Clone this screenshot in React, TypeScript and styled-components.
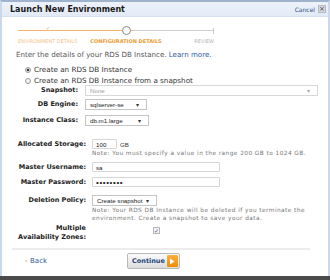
import styled, { createGlobalStyle } from 'styled-components'

const GlobalStyle = createGlobalStyle`
  html, body {
    margin: 0;
    padding: 0;
    width: 330px;
    height: 280px;
    overflow: hidden;
    background: #ffffff;
  }
  * {
    box-sizing: border-box;
  }
`

function App() {
  return (
    <>
      <GlobalStyle />
      <Window>
        <Header>
          <Title>Launch New Environment</Title>
          <CancelGroup>
            <CancelLink>Cancel</CancelLink>
            <CloseBox>×</CloseBox>
          </CancelGroup>
        </Header>

        <Body>
          <Stepper>
            <MarkerRow>
              <Marker $align="center">
                <Check>✓</Check>
              </Marker>
              <Marker $align="center">
                <Circle />
              </Marker>
              <Marker $align="end">
                <EndTick />
              </Marker>
            </MarkerRow>
            <StepLabel $state="done" $align="start">Environment Details</StepLabel>
            <StepLabel $state="current" $align="center">Configuration Details</StepLabel>
            <StepLabel $state="todo" $align="end">Review</StepLabel>
          </Stepper>

          <Intro>
            Enter the details of your RDS DB Instance. <Link>Learn more.</Link>
          </Intro>

          <Options>
            <Option>
              <Radio $checked />
              Create an RDS DB Instance
            </Option>
            <Option>
              <Radio />
              Create an RDS DB Instance from a snapshot
            </Option>
          </Options>

          {/* snapshot / engine / class */}
          <Form $labelWidth={62} $gap={7}>
            <Label>Snapshot:</Label>
            <Cell>
              <Select $width={233} $disabled>
                <span>None</span>
                <Caret $muted>▾</Caret>
              </Select>
            </Cell>

            <Label $top={3}>DB Engine:</Label>
            <Cell $top={3}>
              <Select $width={62}>
                <span>sqlserver-se</span>
                <Caret>▾</Caret>
              </Select>
            </Cell>

            <Label $top={5}>Instance Class:</Label>
            <Cell $top={5}>
              <Select $width={64}>
                <span>db.m1.large</span>
                <Caret>▾</Caret>
              </Select>
            </Cell>
          </Form>

          {/* storage / credentials / policy */}
          <Form $labelWidth={70} $gap={6}>
            <Label $top={13}>Allocated Storage:</Label>
            <Cell $top={13}>
              <InlineRow>
                <TextInput $width={25} value="100" readOnly />
                <Unit>GB</Unit>
              </InlineRow>
              <Note>Note: You must specify a value in the range 200 GB to 1024 GB.</Note>
            </Cell>

            <Label $top={5}>Master Username:</Label>
            <Cell $top={5}>
              <TextInput $width={128} value="sa" readOnly />
            </Cell>

            <Label $top={4}>Master Password:</Label>
            <Cell $top={4}>
              <TextInput $width={128} $dots type="password" value="password" readOnly />
            </Cell>

            <Label $top={7}>Deletion Policy:</Label>
            <Cell $top={7}>
              <Select $width={65}>
                <span>Create snapshot</span>
                <Caret>▾</Caret>
              </Select>
              <Note>
                Note: Your RDS DB Instance will be deleted if you terminate the
                <br />
                environment. Create a snapshot to save your data.
              </Note>
            </Cell>

            <Label $top={2} $lineHeight={9}>
              Multiple
              <br />
              Availability Zones:
            </Label>
            <Cell $top={2}>
              <CheckBox>✓</CheckBox>
            </Cell>
          </Form>
        </Body>

        <Footer>
          <BackLink>
            <BackArrow>‹</BackArrow> Back
          </BackLink>
          <ContinueButton>
            Continue
            <PlayIcon>
              <svg width="6" height="7" viewBox="0 0 6 7">
                <path d="M1 0.5 L5.5 3.5 L1 6.5 Z" fill="#ffffff" />
              </svg>
            </PlayIcon>
          </ContinueButton>
        </Footer>
        <BottomBand />
      </Window>
    </>
  )
}

const Window = styled.div`
  width: 330px;
  height: 280px;
  display: flex;
  flex-direction: column;
  border-top: 2px solid #9fb3cc;
  border-left: 2px solid #c9d8ec;
  border-right: 2px solid #c9d8ec;
  background: #ffffff;
  font-family: 'DejaVu Sans', Verdana, sans-serif;
  font-size: 7px;
  color: #555555;
`

const Header = styled.div`
  height: 15px;
  flex: none;
  display: flex;
  align-items: center;
  justify-content: space-between;
  padding: 0 2px 0 8px;
  background: linear-gradient(#edf2fa, #e2eaf6);
  border-bottom: 1px solid #d5e0ee;
`

const Title = styled.div`
  font-weight: bold;
  font-size: 8px;
  color: #1a1a1a;
`

const CancelGroup = styled.div`
  display: flex;
  align-items: center;
  gap: 3px;
`

const CancelLink = styled.span`
  font-size: 6px;
  color: #2d4f86;
`

const CloseBox = styled.span`
  width: 8px;
  height: 8px;
  display: flex;
  align-items: center;
  justify-content: center;
  background: #d6d9de;
  border: 1px solid #b5bac2;
  font-size: 7px;
  line-height: 1;
  color: #444444;
`

const Body = styled.div`
  flex: 1;
  min-height: 0;
  overflow: hidden;
  padding: 9px 8px 0 14px;
`

const Stepper = styled.div`
  width: 196px;
  margin-left: 2px;
  display: grid;
  grid-template-columns: 60px 1fr 40px;
  column-gap: 6px;
`

const MarkerRow = styled.div`
  grid-column: 1 / -1;
  display: grid;
  grid-template-columns: 60px 1fr 40px;
  column-gap: 6px;
  height: 9px;
  background: linear-gradient(to right, #f2b46d 0, #f2b46d 115px, #cfcfcf 115px, #cfcfcf 100%) no-repeat;
  background-size: 100% 1px;
  background-position: 0 4px;
`

const Marker = styled.div<{ $align: 'center' | 'end' }>`
  display: flex;
  align-items: center;
  justify-content: ${(p) => (p.$align === 'end' ? 'flex-end' : 'center')};
`

const Check = styled.span`
  font-size: 5px;
  line-height: 1;
  color: #f0a050;
  margin-top: -4px;
`

const Circle = styled.span`
  width: 9px;
  height: 9px;
  border-radius: 50%;
  border: 1px solid #8a8a8a;
  background: #ffffff;
`

const EndTick = styled.span`
  width: 1px;
  height: 6px;
  background: #c8c8c8;
`

const StepLabel = styled.div<{ $state: 'done' | 'current' | 'todo'; $align: string }>`
  margin-top: 3px;
  font-size: 5px;
  line-height: 6px;
  text-transform: uppercase;
  white-space: nowrap;
  text-align: ${(p) => p.$align};
  font-weight: ${(p) => (p.$state === 'current' ? 'bold' : 'normal')};
  color: ${(p) => (p.$state === 'current' ? '#ec9a34' : p.$state === 'done' ? '#f3bf88' : '#b3b3b3')};
`

const Intro = styled.div`
  margin-top: 6px;
  font-size: 7.1px;
  line-height: 9px;
  color: #555555;
  white-space: nowrap;
`

const Link = styled.span`
  color: #2a5a9e;
`

const Options = styled.div`
  margin-top: 6px;
  padding-left: 9px;
  display: flex;
  flex-direction: column;
  gap: 2px;
`

const Option = styled.div`
  display: flex;
  align-items: center;
  gap: 3px;
  font-size: 7.2px;
  line-height: 9px;
  color: #333333;
  white-space: nowrap;
`

const Radio = styled.span<{ $checked?: boolean }>`
  width: 6px;
  height: 6px;
  border-radius: 50%;
  border: 1px solid #9a9a9a;
  background: ${(p) => (p.$checked ? 'radial-gradient(circle, #333 0 1.2px, #e8e8e8 1.6px)' : '#f1f1f1')};
`

const Form = styled.div<{ $labelWidth: number; $gap: number }>`
  display: grid;
  grid-template-columns: ${(p) => p.$labelWidth}px 1fr;
  column-gap: ${(p) => p.$gap}px;
  &:first-of-type {
    margin-top: 1px;
  }
`

const Label = styled.div<{ $top?: number; $lineHeight?: number }>`
  margin-top: ${(p) => p.$top ?? 0}px;
  text-align: right;
  font-size: 6.5px;
  font-weight: bold;
  color: #222222;
  line-height: ${(p) => p.$lineHeight ?? 11}px;
  white-space: nowrap;
`

const Cell = styled.div<{ $top?: number }>`
  margin-top: ${(p) => p.$top ?? 0}px;
  min-width: 0;
  display: flex;
  flex-direction: column;
  align-items: flex-start;
`

const Select = styled.div<{ $width: number; $disabled?: boolean }>`
  width: ${(p) => p.$width}px;
  height: 11px;
  display: flex;
  align-items: center;
  justify-content: space-between;
  padding: 0 7px 0 4px;
  border: 1px solid ${(p) => (p.$disabled ? '#d8d8d8' : '#c4c4c4')};
  background: #ffffff;
  font-family: 'Liberation Sans', Arial, sans-serif;
  font-size: 6.2px;
  color: ${(p) => (p.$disabled ? '#a0a0a0' : '#222222')};
  white-space: nowrap;
`

const Caret = styled.span<{ $muted?: boolean }>`
  font-size: 6px;
  color: ${(p) => (p.$muted ? '#aaaaaa' : '#333333')};
`

const InlineRow = styled.div`
  display: flex;
  align-items: center;
  gap: 3px;
`

const TextInput = styled.input<{ $width: number; $dots?: boolean }>`
  width: ${(p) => p.$width}px;
  height: 10px;
  margin: 0;
  padding: 0 3px;
  border: 1px solid #d6d6d6;
  border-radius: 1px;
  font-family: 'Liberation Sans', Arial, sans-serif;
  font-size: ${(p) => (p.$dots ? 8 : 6.2)}px;
  letter-spacing: ${(p) => (p.$dots ? 0.6 : 0)}px;
  color: #222222;
  outline: none;
`

const Unit = styled.span`
  font-family: 'Liberation Sans', Arial, sans-serif;
  font-size: 6.2px;
  color: #333333;
`

const Note = styled.div`
  margin-top: 0;
  font-size: 5.8px;
  letter-spacing: 0.45px;
  line-height: 8px;
  color: #777777;
  white-space: nowrap;
`

const CheckBox = styled.span`
  margin-left: 61px;
  margin-top: 3px;
  width: 7px;
  height: 7px;
  display: flex;
  align-items: center;
  justify-content: center;
  border: 1px solid #b8b8b8;
  background: #f2f2f2;
  font-size: 6px;
  line-height: 1;
  color: #3a5a8a;
`

const Footer = styled.div`
  margin: 0 18px 0 10px;
  padding: 0 0 4px 13px;
  height: 28px;
  flex: none;
  display: flex;
  align-items: center;
  gap: 80px;
  border-top: 2px solid #ececec;
`

const BackLink = styled.span`
  font-size: 7px;
  color: #2a5a9e;
`

const BackArrow = styled.span`
  color: #f0a050;
`

const ContinueButton = styled.div`
  height: 16px;
  display: flex;
  align-items: center;
  gap: 2px;
  padding: 0 1px 0 4px;
  border: 1px solid #b9b9b9;
  border-radius: 2px;
  background: linear-gradient(#fbfbfb, #dcdcdc);
  font-size: 6.5px;
  font-weight: bold;
  color: #21467d;
`

const PlayIcon = styled.span`
  width: 11px;
  height: 12px;
  display: flex;
  align-items: center;
  justify-content: center;
  background: linear-gradient(#fbb040, #f08c00);
  border-radius: 1px;
`

const BottomBand = styled.div`
  height: 4px;
  flex: none;
  margin: 0 -2px;
  background: #4a4a4a;
`

export default App
